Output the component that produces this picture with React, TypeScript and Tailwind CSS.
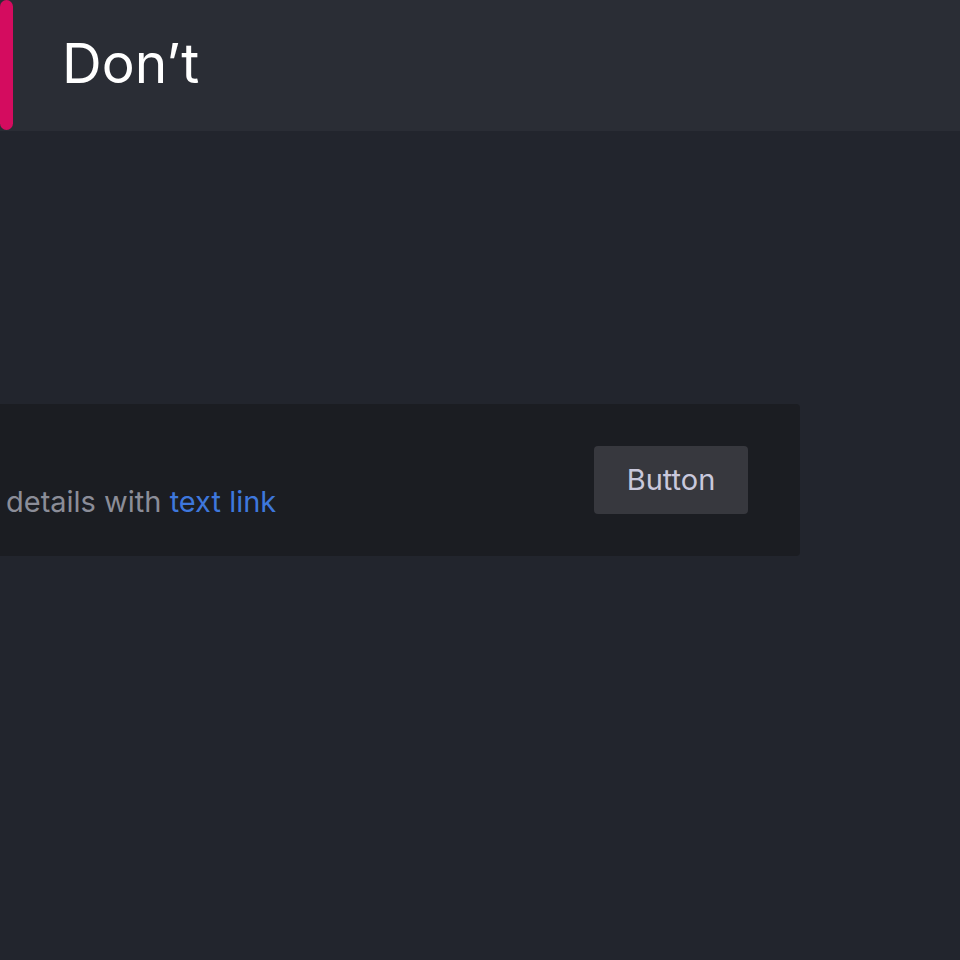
import React from "react";

export default function App() {
  return (
    <div
      className="w-[960px] h-[960px] bg-[#22252d] overflow-hidden flex flex-col"
      style={{ fontFamily: "Inter, 'Noto Sans', sans-serif" }}
    >
      <div className="h-[131px] bg-[#2a2d35] flex items-start">
        <div className="w-[13px] h-[130px] bg-[#d40c5f] rounded-[7px]" />
        <div className="ml-[49px] mt-[27px] text-[55px] leading-[72px] text-white font-normal">
          Don’t
        </div>
      </div>
      <div className="mt-[273px] w-[800px] h-[152px] bg-[#1b1d22] rounded-r-[4px] flex items-center justify-between pr-[52px]">
        <div className="pl-[6px] mt-[43px] text-[29px] leading-[36px] text-[#8b8d98] whitespace-nowrap">
          details with <span className="text-[#3e77dc]">text link</span>
        </div>
        <button className="w-[154px] h-[68px] bg-[#37383e] rounded-[4px] text-[29px] text-[#c9c8dc]">
          Button
        </button>
      </div>
    </div>
  );
}
